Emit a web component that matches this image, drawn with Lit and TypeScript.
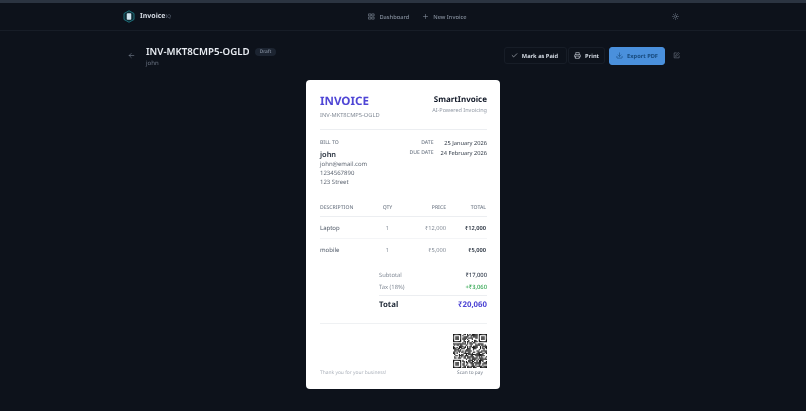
import { LitElement, html, css, svg } from "lit";
import { customElement } from "lit/decorators.js";

const ic = (body: unknown, size = 7, sw = 2) => html`<svg class="ic" width=${size} height=${size} viewBox="0 0 24 24" fill="none" stroke="currentColor" stroke-width=${sw} stroke-linecap="round" stroke-linejoin="round">${body}</svg>`;

function qrCells() {
  const n = 29;
  const cells: unknown[] = [];
  let s = 12345;
  const finder = (x: number, y: number) => {
    if (x < 0 || y < 0 || x > 7 || y > 7) return -1;
    if (x === 7 || y === 7) return 0;
    if (x === 0 || x === 6 || y === 0 || y === 6) return 1;
    if (x === 1 || x === 5 || y === 1 || y === 5) return 0;
    return 1;
  };
  for (let y = 0; y < n; y++) {
    for (let x = 0; x < n; x++) {
      s = (s * 1103515245 + 12345) & 0x7fffffff;
      let v = (s >> 16) % 100 < 58 ? 1 : 0;
      for (const [ox, oy, fx, fy] of [[0, 0, 1, 1], [n - 1, 0, -1, 1], [0, n - 1, 1, -1]]) {
        const f = finder((x - ox) * fx, (y - oy) * fy);
        if (f >= 0) v = f;
      }
      if (v) cells.push(svg`<rect x=${x} y=${y} width="1" height="1"/>`);
    }
  }
  return cells;
}

@customElement("app-root")
export class AppRoot extends LitElement {
  static styles = css`
    :host { display: block; width: 806px; height: 411px; overflow: hidden; background: #0d121b; font-family: "Noto Sans", "Open Sans", sans-serif; color: #e5e9f0; text-rendering: geometricPrecision; }
    .page { height: 100%; background: #0d121b; filter: blur(.28px); }
    .ic { display: block; flex: none; }
    .strip { height: 3px; background: #2b3441; }
    .nav { height: 27px; border-bottom: 1px solid #171d27; display: flex; justify-content: center; }
    .wrap { width: 560px; display: flex; align-items: center; justify-content: space-between; padding-right: 4px; box-sizing: border-box; }
    .brand { display: flex; align-items: center; gap: 5px; font-size: 7px; font-weight: 700; color: #d5dbe4; }
    .brand small { font-size: 4.8px; font-weight: 400; color: #6b7686; }
    .logo { width: 12px; height: 13px; }
    .links { display: flex; gap: 13px; font-size: 5.7px; font-weight: 500; color: #858f9d; margin-right: 8px; }
    .links span { display: flex; align-items: center; gap: 4px; }
    .gear { color: #7b8594; }
    .head { width: 560px; margin: 12px auto 0; display: flex; align-items: center; padding-left: 5px; padding-right: 3px; box-sizing: border-box; height: 25px; }
    .back { color: #7b8594; margin-right: 11px; }
    .title { display: flex; flex-direction: column; gap: 1px; flex: 1; }
    .tl { display: flex; align-items: center; gap: 5px; }
    h1 { margin: 0; font-size: 9.7px; line-height: 14px; font-weight: 600; color: #e9edf3; }
    .badge { font-size: 4.8px; background: #1c2431; color: #8792a2; border-radius: 5px; padding: 1px 5px; font-weight: 500; }
    .sub { font-size: 6px; color: #707a89; line-height: 7px; }
    .acts { display: flex; align-items: center; gap: 4px; }
    .btn { display: flex; align-items: center; gap: 4px; height: 17px; padding: 0 6px; border: 1px solid #171d27; border-radius: 3px; font-size: 5.7px; font-weight: 700; color: #d3d9e2; box-sizing: border-box; }
    .btn.mark { padding-right: 8px; padding-left: 6px; }
    .btn.print { margin-left: -3px; padding: 0 5px; }
    .btn.pri { background: #4a90dc; border-color: #4a90dc; color: #174a7d; height: 18px; }
    .edit { color: #7b8594; margin-left: 4px; }
    .card { width: 194px; height: 309px; box-sizing: border-box; margin: 12px auto 0; background: #fff; border-radius: 4px; padding: 14px 13px 0 14px; color: #374151; }
    .top { display: flex; justify-content: space-between; height: 35px; border-bottom: 1px solid #eceef1; }
    .inv { font-size: 11.6px; line-height: 15px; font-weight: 700; color: #4f46d5; }
    .no { font-size: 5.7px; color: #808995; margin-top: 2px; line-height: 8px; }
    .co { text-align: right; }
    .co b { display: block; font-size: 8px; line-height: 12px; font-weight: 700; color: #111827; }
    .co span { font-size: 5.5px; color: #8f97a3; line-height: 8px; display: block; }
    .bill { display: flex; justify-content: space-between; padding-top: 10px; height: 62px; }
    .lbl { font-size: 5.1px; color: #737c89; font-weight: 500; line-height: 7px; }
    .name { font-size: 7.4px; line-height: 10px; font-weight: 600; color: #1f2937; margin-top: 3px; }
    .ln { font-size: 6px; color: #5f6773; line-height: 8.5px; }
    .ln.last { margin-top: .5px; }
    .dates { display: grid; grid-template-columns: auto auto; column-gap: 7px; row-gap: 3px; justify-content: end; text-align: right; align-items: center; align-content: start; }
    .dates .v { font-size: 5.7px; color: #2f3845; line-height: 7px; }
    table { border-collapse: collapse; width: 100%; font-size: 5.7px; margin-top: -2px; table-layout: fixed; }
    th { font-size: 5.1px; font-weight: 500; color: #737c89; text-align: right; height: 16px; border-bottom: 1px solid #eceef1; padding: 0 1px 0 0; }
    td { height: 21px; text-align: right; color: #808995; border-bottom: 1px solid #f4f5f7; padding: 0 1px 0 0; }
    tr:last-child td { border-bottom: none; }
    th:first-child, td:first-child { text-align: left; font-size: 6px; }
    th:first-child { font-size: 5.1px; }
    td:first-child { color: #4b5563; }
    th:nth-child(2), td:nth-child(2) { text-align: center; }
    td:last-child { font-weight: 600; color: #1f2937; }
    .sum { margin: 9px 0 0 59px; font-size: 5.8px; }
    .sr { display: flex; justify-content: space-between; height: 12px; align-items: center; color: #808995; }
    .sr b { font-weight: 500; color: #374151; }
    .sr .g { color: #34a853; font-weight: 500; }
    .tot { border-top: 1px solid #eceef1; margin-top: 2px; height: 18px; display: flex; justify-content: space-between; align-items: center; font-size: 7.8px; font-weight: 700; color: #1f2937; }
    .tot b { color: #4f46d5; font-weight: 700; }
    .foot { border-top: 1px solid #eff1f3; margin-top: 9px; padding-top: 10px; display: flex; justify-content: space-between; align-items: flex-end; }
    .thx { font-size: 4.9px; color: #aab0ba; line-height: 7px; }
    .qr { display: flex; flex-direction: column; align-items: center; gap: 2px; }
    .qr svg { display: block; width: 34px; height: 34px; }
    .qr span { font-size: 4.8px; color: #737c89; line-height: 7px; }
  `;

  render() {
    return html`<div class="page">
      <div class="strip"></div>
      <div class="nav"><div class="wrap">
        <div class="brand">
          <svg class="logo" viewBox="0 0 24 26" fill="none"><path d="M12 1.5 22 7v12l-10 5.5L2 19V7z" fill="#0d2a33" stroke="#1f6f7a" stroke-width="2"/><rect x="7.5" y="6.5" width="9" height="13" rx="1.5" fill="#cfe3ee"/></svg>
          <span>Invoice<small>IQ</small></span>
        </div>
        <div class="links">
          <span>${ic(svg`<rect x="3" y="3" width="7" height="7"/><rect x="14" y="3" width="7" height="7"/><rect x="14" y="14" width="7" height="7"/><rect x="3" y="14" width="7" height="7"/>`)}Dashboard</span>
          <span>${ic(svg`<path d="M12 5v14M5 12h14"/>`)}New Invoice</span>
        </div>
        <span class="gear">${ic(svg`<circle cx="12" cy="12" r="4"/><path d="M12 2v2M12 20v2M4.9 4.9l1.4 1.4M17.7 17.7l1.4 1.4M2 12h2M20 12h2M6.3 17.7l-1.4 1.4M19.1 4.9l-1.4 1.4"/>`)}</span>
      </div></div>
      <div class="head">
        <span class="back">${ic(svg`<path d="M20 12H4M11 19l-7-7 7-7"/>`, 7)}</span>
        <div class="title">
          <div class="tl"><h1>INV-MKT8CMP5-OGLD</h1><span class="badge">Draft</span></div>
          <div class="sub">john</div>
        </div>
        <div class="acts">
          <div class="btn mark">${ic(svg`<path d="M20 6 9 17l-5-5"/>`)}Mark as Paid</div>
          <div class="btn print">${ic(svg`<path d="M6 9V2h12v7M6 18H4a2 2 0 0 1-2-2v-5a2 2 0 0 1 2-2h16a2 2 0 0 1 2 2v5a2 2 0 0 1-2 2h-2"/><rect x="6" y="14" width="12" height="8"/>`)}Print</div>
          <div class="btn pri">${ic(svg`<path d="M21 15v4a2 2 0 0 1-2 2H5a2 2 0 0 1-2-2v-4M7 10l5 5 5-5M12 15V3"/>`)}Export PDF</div>
          <span class="edit">${ic(svg`<path d="M11 3H4v17h17v-7"/><path d="M19 2.5l2.5 2.5L12 14.5 9 15l.5-3z"/>`, 7, 1.8)}</span>
        </div>
      </div>
      <div class="card">
        <div class="top">
          <div><div class="inv">INVOICE</div><div class="no">INV-MKT8CMP5-OGLD</div></div>
          <div class="co"><b>SmartInvoice</b><span>AI-Powered Invoicing</span></div>
        </div>
        <div class="bill">
          <div>
            <div class="lbl">BILL TO</div>
            <div class="name">john</div>
            <div class="ln">john@email.com</div>
            <div class="ln">1234567890</div>
            <div class="ln last">123 Street</div>
          </div>
          <div class="dates">
            <span class="lbl">DATE</span><span class="v">25 January 2026</span>
            <span class="lbl">DUE DATE</span><span class="v">24 February 2026</span>
          </div>
        </div>
        <table>
          <colgroup><col style="width:54px"><col style="width:28px"><col style="width:45px"><col></colgroup>
          <tr><th>DESCRIPTION</th><th>QTY</th><th>PRICE</th><th>TOTAL</th></tr>
          <tr><td>Laptop</td><td>1</td><td>₹12,000</td><td>₹12,000</td></tr>
          <tr><td>mobile</td><td>1</td><td>₹5,000</td><td>₹5,000</td></tr>
        </table>
        <div class="sum">
          <div class="sr"><span>Subtotal</span><b>₹17,000</b></div>
          <div class="sr"><span>Tax (18%)</span><span class="g">+₹3,060</span></div>
          <div class="tot"><span>Total</span><b>₹20,060</b></div>
        </div>
        <div class="foot">
          <div class="thx">Thank you for your business!</div>
          <div class="qr">
            <svg viewBox="0 0 29 29" fill="#111">${qrCells()}</svg>
            <span>Scan to pay</span>
          </div>
        </div>
      </div>
    </div>`;
  }
}
